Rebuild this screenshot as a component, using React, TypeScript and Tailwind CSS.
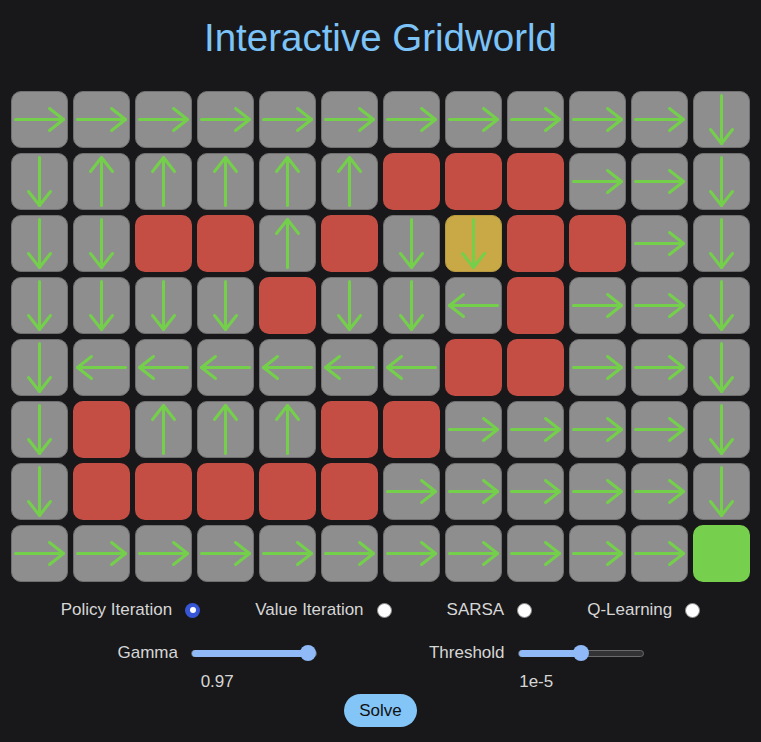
import React from "react";

type Cell = "R" | "L" | "U" | "D" | "X" | "G";

// policy after solving, one string per row
const rows: string[] = [
  "RRRRRRRRRRRD",
  "DUUUUUXXXRRD",
  "DDXXUXDDXXRD",
  "DDDDXDDLXRRD",
  "DLLLLLLXXRRD",
  "DXUUUXXRRRRD",
  "DXXXXXRRRRRD",
  "RRRRRRRRRRRG",
];

const rotation: Record<string, number> = { R: 0, D: 90, L: 180, U: -90 };

function Arrow({ dir }: { dir: string }) {
  return (
    <svg width="57" height="57" viewBox="0 0 57 57" className="absolute -left-px -top-px">
      <g
        transform={`rotate(${rotation[dir]} 28.5 28.5)`}
        stroke="#74d04b"
        strokeWidth="3"
        strokeLinecap="round"
        strokeLinejoin="round"
        fill="none"
      >
        <line x1="4.5" y1="28.5" x2="52.5" y2="28.5" />
        <polyline points="38.5,17.5 52.5,28.5 38.5,39.5" />
      </g>
    </svg>
  );
}

function GridCell({ cell, agent }: { cell: Cell; agent: boolean }) {
  if (cell === "X") {
    return <div className="w-[57px] h-[57px] rounded-[10px] bg-[#c44e44]" />;
  }
  if (cell === "G") {
    return <div className="w-[57px] h-[57px] rounded-[10px] bg-[#77cf4e]" />;
  }
  return (
    <div
      className={`relative w-[57px] h-[57px] rounded-[10px] border ${
        agent ? "bg-[#c9a846] border-[#b8993f]" : "bg-[#8e8e8e] border-[#707070]"
      }`}
    >
      <Arrow dir={cell} />
    </div>
  );
}

function Radio({ label, checked }: { label: string; checked?: boolean }) {
  return (
    <label className="flex items-center gap-[13px]">
      <span>{label}</span>
      {checked ? (
        <span className="w-[15px] h-[15px] rounded-full bg-[#3656d6] flex items-center justify-center">
          <span className="w-[6px] h-[6px] rounded-full bg-white" />
        </span>
      ) : (
        <span className="w-[15px] h-[15px] rounded-full bg-white border border-[#8a8a8a]" />
      )}
    </label>
  );
}

function Slider({ label, value, pct }: { label: string; value: string; pct: number }) {
  return (
    <div className="flex flex-col items-center">
      <div className="flex items-center gap-[13px]">
        <span>{label}</span>
        <div className="relative w-[126px] h-[7px] rounded-full bg-[#333335] border border-[#6a6a6a]">
          <div
            className="absolute left-0 top-[-1px] h-[7px] rounded-full bg-[#8fb9f7]"
            style={{ width: `${pct}%` }}
          />
          <div
            className="absolute top-1/2 w-[16px] h-[16px] -translate-y-1/2 -translate-x-1/2 rounded-full bg-[#8fb9f7]"
            style={{ left: `${pct}%` }}
          />
        </div>
      </div>
      <div className="mt-[9px] leading-[20px]">{value}</div>
    </div>
  );
}

export default function App() {
  return (
    <div className="min-h-[742px] bg-[#18181a] font-['Liberation_Sans',Arial,sans-serif] text-[#d6d6d6] text-[17px] leading-[20px]">
      <h1 className="pt-[15px] text-center text-[38.5px] leading-[46px] text-[#7cc3f7]">
        Interactive Gridworld
      </h1>

      <div className="mt-[30px] mx-auto w-[739px] grid grid-cols-12 gap-[5px]">
        {rows.map((row, r) =>
          row.split("").map((c, ci) => (
            <GridCell key={`${r}-${ci}`} cell={c as Cell} agent={r === 2 && ci === 7} />
          ))
        )}
      </div>

      <div className="mt-[18px] flex justify-center gap-[55px]">
        <Radio label="Policy Iteration" checked />
        <Radio label="Value Iteration" />
        <Radio label="SARSA" />
        <Radio label="Q-Learning" />
      </div>

      <div className="mt-[23px] flex justify-center gap-[112px]">
        <Slider label="Gamma" value="0.97" pct={94} />
        <Slider label="Threshold" value="1e-5" pct={50} />
      </div>

      <div className="mt-[2px] flex justify-center">
        <button className="h-[33px] px-[15px] rounded-full bg-[#83c5f7] text-[#111] text-[17px]">
          Solve
        </button>
      </div>
    </div>
  );
}
